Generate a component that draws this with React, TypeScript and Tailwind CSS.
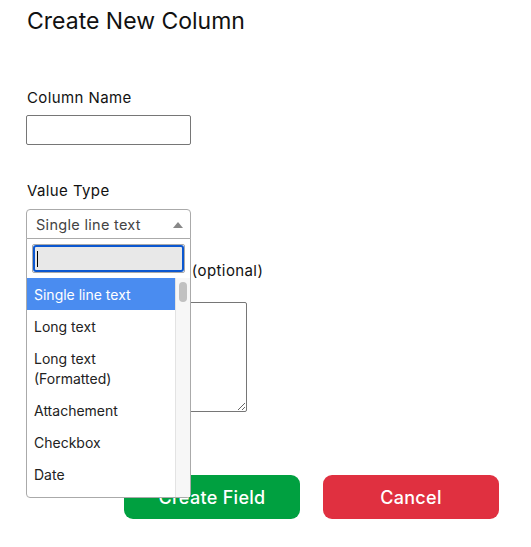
import { useState } from "react";

const options = [
  "Single line text",
  "Long text",
  "Long text (Formatted)",
  "Attachement",
  "Checkbox",
  "Date",
  "Number",
];

export default function App() {
  const [selected] = useState("Single line text");

  return (
    <main className="w-[531px] h-[547px] bg-white font-['Inter',sans-serif] text-[#111] relative">
      <div className="pl-[27px] pt-[6px]">
        <h1 className="text-[23px] leading-[30px] font-normal">Create New Column</h1>

        <label className="block mt-[52px] text-[15px] tracking-[0.4px] leading-5">Column Name</label>
        <input
          type="text"
          className="block mt-[7px] -ml-px w-[165px] h-[30px] border border-[#767676] rounded-[2px] outline-none"
        />

        <label className="block mt-[36px] text-[15px] tracking-[0.4px] leading-5">Value Type</label>
        <div className="relative mt-[8px] -ml-px w-[165px]">
          {/* select box */}
          <div className="h-[30px] border border-[#aaa] rounded-t-[4px] flex items-center justify-between pl-[9px] pr-[6px] pt-[2px] text-[14.5px] tracking-[0.3px] text-[#444]">
            <span>{selected}</span>
            <svg width="10" height="6" viewBox="0 0 10 6" className="mr-[1px]">
              <path d="M0 6 L5 0 L10 6 Z" fill="#888" />
            </svg>
          </div>

          {/* dropdown */}
          <div className="absolute left-0 top-[29px] w-[165px] z-10 bg-white border border-[#aaa] rounded-b-[4px] font-['Inter',sans-serif]">
            <div className="px-[5px] pt-[5px] pb-[5px]">
              <div className="border border-[#aaa] rounded-[2px]">
                <div className="h-[27px] bg-[#e8e8e8] border-2 border-[#0b57d0] rounded-[3px] flex items-center pl-[2px]">
                  <span className="w-px h-[16px] bg-black" />
                </div>
              </div>
            </div>
            <div className="flex h-[219px] overflow-hidden">
              <ul className="flex-1 text-[14px] leading-5 text-[#222]">
                {options.map((o) => (
                  <li
                    key={o}
                    className={
                      o === selected
                        ? "px-[7px] pt-[7px] pb-[5px] bg-[#4a8cf0] text-white"
                        : "px-[7px] pt-[7px] pb-[5px]"
                    }
                  >
                    {o === "Long text (Formatted)" ? (
                      <>
                        Long text
                        <br />
                        (Formatted)
                      </>
                    ) : (
                      o
                    )}
                  </li>
                ))}
              </ul>
              <div className="w-[15px] bg-[#f7f7f7] border-l border-[#e3e3e3] pt-[4px] flex justify-center">
                <div className="w-[8px] h-[20px] rounded-full bg-[#c1c1c1]" />
              </div>
            </div>
          </div>
        </div>

        <label className="block mt-[22px] text-[15px] tracking-[0.4px] leading-5">Column's Description (optional)</label>
        <textarea className="block mt-[21px] -ml-px w-[221px] h-[110px] border border-[#767676] rounded-[2px] outline-none" />

        <div className="flex gap-[23px] ml-[97px] mt-[63px]">
          <button className="w-[176px] h-[44px] rounded-[9px] bg-[#00a040] text-white text-[18px] tracking-[0.3px] font-medium">
            Create Field
          </button>
          <button className="w-[176px] h-[44px] rounded-[9px] bg-[#e03040] text-white text-[18px] tracking-[0.3px] font-medium">
            Cancel
          </button>
        </div>
      </div>
    </main>
  );
}
